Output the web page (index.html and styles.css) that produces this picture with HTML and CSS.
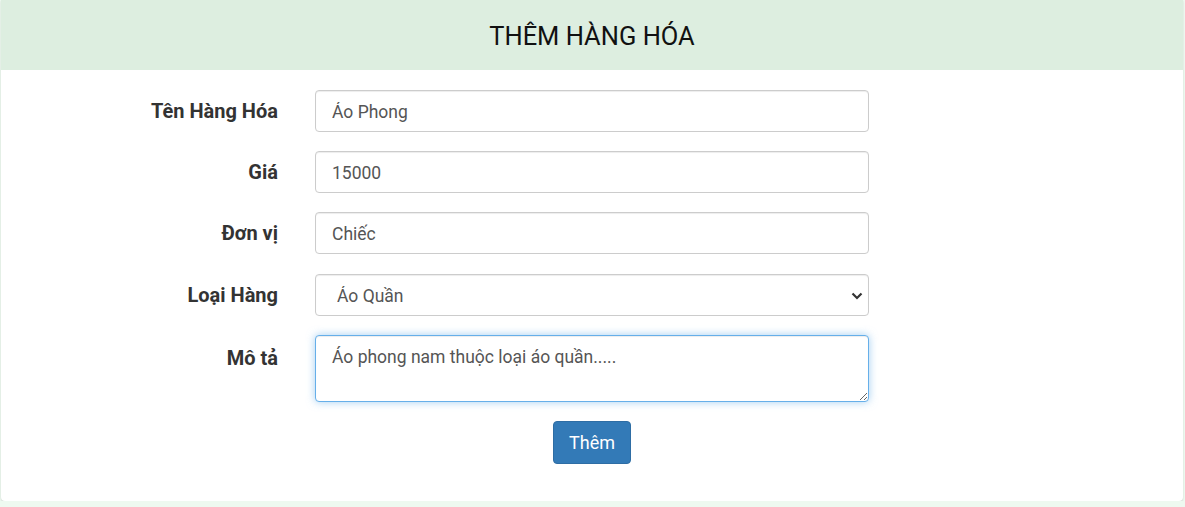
FILE: index.html
```html
<!DOCTYPE html>
<html lang="vi">
<head>
<meta charset="utf-8">
<title>Thêm hàng hóa</title>
<link rel="stylesheet" href="styles.css">
</head>
<body>
<div class="panel">
  <div class="panel-heading">THÊM HÀNG HÓA</div>
  <form class="panel-body">
    <div class="row">
      <label class="lbl">Tên Hàng Hóa</label>
      <input class="ctrl" type="text" value="Áo Phong">
    </div>
    <div class="row">
      <label class="lbl">Giá</label>
      <input class="ctrl" type="text" value="15000">
    </div>
    <div class="row">
      <label class="lbl">Đơn vị</label>
      <input class="ctrl" type="text" value="Chiếc">
    </div>
    <div class="row shift">
      <label class="lbl">Loại Hàng</label>
      <div class="select-wrap">
        <select class="ctrl sel"><option>Áo Quần</option></select>
        <svg class="chev" width="12" height="8" viewBox="0 0 12 8"><path d="M1.5 1.5 L6 6 L10.5 1.5" fill="none" stroke="#333" stroke-width="2.2"/></svg>
      </div>
    </div>
    <div class="row top">
      <label class="lbl">Mô tả</label>
      <textarea class="ctrl area">Áo phong nam thuộc loại áo quần.....</textarea>
    </div>
    <div class="actions">
      <button type="button" class="btn">Thêm</button>
    </div>
  </form>
</div>
</body>
</html>
```
FILE: styles.css
```css
html, body {
  margin: 0;
  padding: 0;
  background: #eef9f0;
  font-family: Roboto, "Liberation Sans", sans-serif;
}
.panel {
  margin: 0 2px 0 1px;
  background: #fff;
  border-radius: 0 0 4px 4px;
  box-shadow: 0 1px 2px rgba(0,0,0,0.15);
  height: 501px;
  box-sizing: border-box;
}
.panel-heading {
  background: #ddeee0;
  height: 70px;
  display: flex;
  align-items: center;
  justify-content: center;
  font-size: 25.5px;
  color: #111;
  padding-top: 1px;
  box-sizing: border-box;
}
.panel-body {
  padding: 20px 0 0 0;
  display: flex;
  flex-direction: column;
  gap: 19px;
}
.row {
  display: grid;
  grid-template-columns: 277px 554px;
  column-gap: 37px;
  align-items: center;
}
.row.shift { margin-top: 1px; }
.row.top { align-items: start; }
.lbl {
  text-align: right;
  font-weight: bold;
  font-size: 20px;
  color: #333;
}
.row.top .lbl { padding-top: 11px; }
.ctrl {
  box-sizing: border-box;
  width: 554px;
  height: 42px;
  border: 1px solid #ccc;
  border-radius: 4px;
  padding: 2px 16px 0;
  font-family: Roboto, "Liberation Sans", sans-serif;
  font-size: 17.5px;
  color: #555;
  background: #fff;
  box-shadow: inset 0 1px 1px rgba(0,0,0,0.075);
  outline: none;
}
.select-wrap { position: relative; width: 554px; }
.sel {
  appearance: none;
  -webkit-appearance: none;
  padding-left: 21px;
}
.chev {
  position: absolute;
  right: 6px;
  top: 18px;
  pointer-events: none;
}
.area {
  height: 67px;
  padding: 10px 16px 8px;
  border-color: #66afe9;
  box-shadow: inset 0 1px 1px rgba(0,0,0,0.075), 0 0 8px rgba(102,175,233,0.6);
  resize: vertical;
  line-height: 1.35;
}
.actions {
  display: flex;
  justify-content: center;
}
.btn {
  width: 78px;
  height: 43px;
  background: #337ab7;
  border: 1px solid #2e6da4;
  border-radius: 4px;
  color: #fff;
  font-family: Roboto, "Liberation Sans", sans-serif;
  font-size: 18px;
}
```
